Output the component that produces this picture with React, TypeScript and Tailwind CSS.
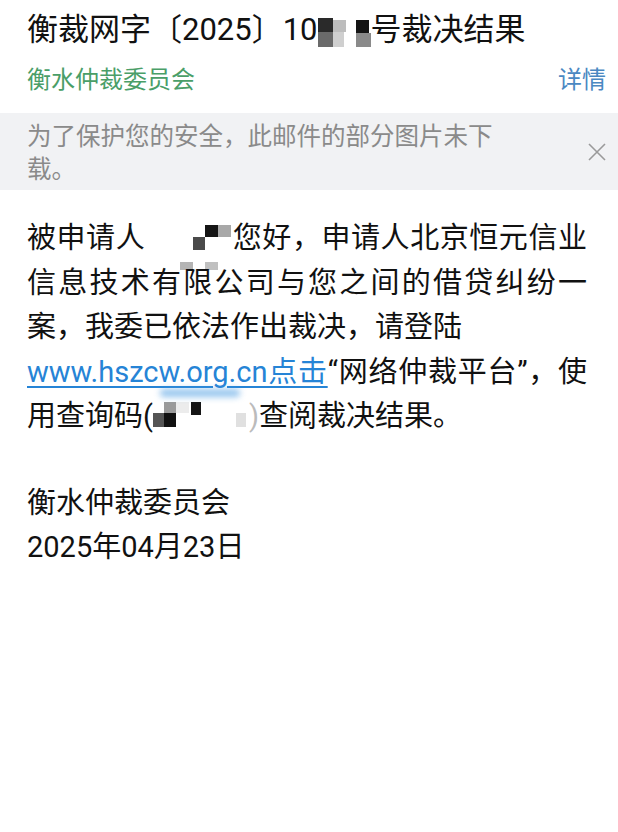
import React from "react";

type Cell = [number, number, number, number, string];

// pixelated redaction blocks, drawn over the text line
function Mosaic({ width, height, cells }: { width: number; height: number; cells: Cell[] }) {
  return (
    <svg width={width} height={height} className="inline-block align-top overflow-visible">
      {cells.map(([x, y, w, h, c], i) => (
        <rect key={i} x={x} y={y} width={w} height={h} fill={c} />
      ))}
    </svg>
  );
}

export default function App() {
  const font = { fontFamily: "Roboto, 'Noto Sans CJK SC', sans-serif" };

  const titleCells: Cell[] = [
    [0, 10, 15, 14, "#2a2a2a"],
    [15, 12, 13, 12, "#bdbdbd"],
    [0, 24, 15, 15, "#6a6a6a"],
    [15, 24, 11, 15, "#cfcfcf"],
    [38, 12, 13, 13, "#151515"],
    [38, 25, 15, 14, "#8a8a8a"],
  ];

  const nameCells: Cell[] = [
    [60, 9, 13, 12, "#151515"],
    [73, 9, 13, 12, "#a8a8a8"],
    [48, 21, 12, 13, "#4a4a4a"],
    [35, 46, 13, 8, "#b4b4b4"],
    [60, 46, 13, 8, "#c0c0c0"],
  ];

  const codeCells: Cell[] = [
    [0, 19, 11, 14, "#555555"],
    [11, 8, 12, 11, "#9a9a9a"],
    [11, 19, 12, 14, "#111111"],
    [23, 8, 13, 11, "#ececec"],
    [38, 8, 10, 13, "#151515"],
    [83, 19, 10, 14, "#e0e0e0"],
  ];

  return (
    <div className="w-[618px] min-h-[832px] bg-white text-[#111]" style={font}>
      {/* Subject */}
      <div className="pl-[27px] pt-[8px] text-[31px] leading-[44px] whitespace-nowrap">
        衡裁网字〔2025〕10
        <Mosaic width={53} height={44} cells={titleCells} />
        号裁决结果
      </div>

      {/* Sender row */}
      <div className="mt-[10px] flex items-center justify-between pl-[27px] pr-[12px] text-[24px] leading-[36px]">
        <span className="text-[#4a9e68]">衡水仲裁委员会</span>
        <span className="text-[#4a88c2]">详情</span>
      </div>

      {/* Image blocked notice */}
      <div className="mt-[15px] flex items-center justify-between bg-[#f1f2f4] pl-[27px] pr-[12px] pt-[7px] pb-[4px]">
        <p className="w-[475px] text-[24.5px] leading-[33px] text-[#8a8a8a]">
          为了保护您的安全，此邮件的部分图片未下载。
        </p>
        <svg width="18" height="18" viewBox="0 0 18 18" className="mb-[2px]">
          <path d="M1 1L17 17M17 1L1 17" stroke="#9a9a9a" strokeWidth="1.6" />
        </svg>
      </div>

      {/* Body */}
      <div className="mt-[26px] w-[587px] pl-[27px] text-[29px] leading-[44.5px]">
        <p className="text-justify">
          被申请人
          <Mosaic width={87} height={44} cells={nameCells} />
          您好，申请人北京恒元信业信息技术有限公司与您之间的借贷纠纷一案，我委已依法作出裁决，请登陆
          <br />
          <span className="relative text-[#2684d6] underline decoration-[2px] underline-offset-[4px]">
            www.hszcw.org.cn点击
            <span className="absolute left-[133px] top-[34px] h-[8px] w-[80px] rounded-full bg-[#4f9fe3] opacity-60 blur-[3px]" />
          </span>
          “网络仲裁平台”，使用查询码(
          <Mosaic width={96} height={44} cells={codeCells} />
          <span className="text-[#bbb]">)</span>查阅裁决结果。
        </p>
        <p className="mt-[42px]">衡水仲裁委员会</p>
        <p>2025年04月23日</p>
      </div>
    </div>
  );
}
